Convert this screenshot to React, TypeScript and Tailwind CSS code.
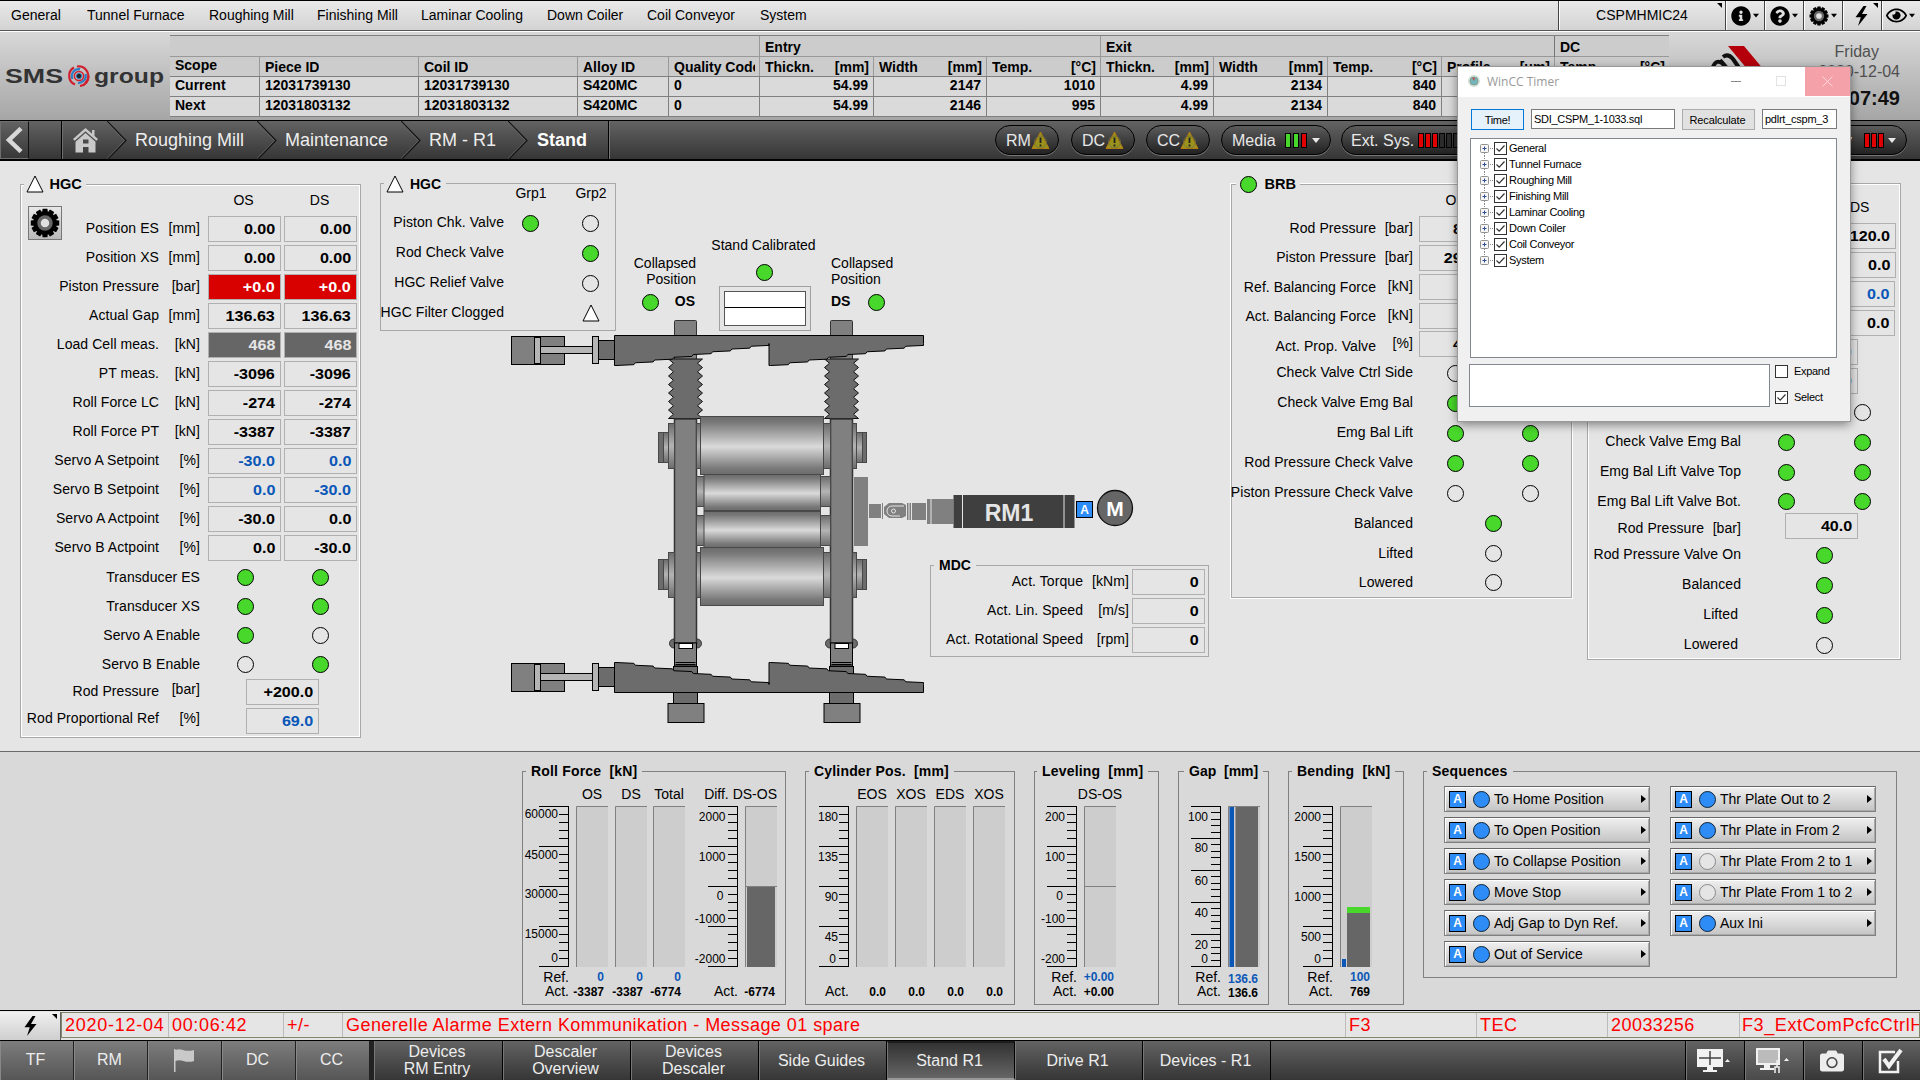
import React from "react";
import { FaCamera, FaCog, FaInfoCircle, FaQuestionCircle, FaRegEye } from "react-icons/fa";

type Kids = { children?: React.ReactNode };

/* ---------- small parts ---------- */

function Led({ on, className = "" }: { on?: boolean; className?: string }) {
  return (
    <span
      className={`block size-[17px] shrink-0 rounded-full border border-black ${on ? "bg-[#48d82b]" : "bg-[#e5e5e5]"} ${className}`}
    />
  );
}

function Field({ v, tone = "plain", className = "", pad = "pr-[5px]" }: { v: string; tone?: string; className?: string; pad?: string }) {
  const tones: Record<string, string> = {
    plain: "text-black",
    blue: "text-[#0a57b8]",
    red: "bg-[#d90000] text-white",
    gray: "bg-[#666666] text-[#e5e5e5]",
  };
  return (
    <span
      className={`flex h-[26px] w-[73px] shrink-0 items-center justify-end border border-[#b0b0b0] ${pad} ${tones[tone]} ${className}`}
    >
      <span className="origin-right scale-x-[1.15] text-[14px] leading-[24px] font-bold">{v}</span>
    </span>
  );
}

function Label({ children, className = "" }: Kids & { className?: string }) {
  return (
    <span className={`flex shrink-0 justify-end text-[14px] leading-[25px] tracking-[0.07px] whitespace-pre ${className}`}>
      {children}
    </span>
  );
}

function Triangle() {
  return (
    <svg width="18" height="18" viewBox="0 0 18 18">
      <path d="M9 1 L17 17 H1 Z" fill="#fff" stroke="#000" />
    </svg>
  );
}

function ABox({ className = "" }: { className?: string }) {
  return (
    <span
      className={`flex h-[17px] w-[17px] shrink-0 items-center justify-center border border-black bg-[#2d8cf5] text-[12px] font-bold text-white ${className}`}
    >
      A
    </span>
  );
}

function Caret({ className = "" }: { className?: string }) {
  return (
    <svg width="8" height="5" viewBox="0 0 8 5" className={className}>
      <path d="M0 0 H8 L4 5 Z" fill="currentColor" />
    </svg>
  );
}

function CornerMark() {
  return (
    <svg width="5" height="5" viewBox="0 0 5 5" className="absolute top-[2px] right-[3px]">
      <path d="M0 0 H5 V5 Z" />
    </svg>
  );
}

/* ---------- top menu ---------- */

const menu: [string, string][] = [
  ["General", "w-[76px]"],
  ["Tunnel Furnace", "w-[122px]"],
  ["Roughing Mill", "w-[108px]"],
  ["Finishing Mill", "w-[104px]"],
  ["Laminar Cooling", "w-[126px]"],
  ["Down Coiler", "w-[100px]"],
  ["Coil Conveyor", "w-[113px]"],
  ["System", "w-[100px]"],
];

function MenuBar() {
  const tool = "relative flex h-full items-center border-l border-[#444] shadow-[inset_1px_0_0_#fff]";
  return (
    <header className="flex h-[32px] border-t border-b border-t-black border-b-white bg-linear-to-b from-[#e9e9e9] to-[#d2d2d2] shadow-[inset_0_-1px_0_#555]">
      <nav className="flex flex-1 items-start pl-[11px] text-[14px]">
        {menu.map(([t, w]) => (
          <span key={t} className={`${w} whitespace-nowrap leading-[28px]`}>
            {t}
          </span>
        ))}
      </nav>
      <div className="flex h-[29px]">
        <div className={`${tool} w-[167px] justify-center pb-px text-[14px]`}>
          CSPMHMIC24
          <CornerMark />
        </div>
        <div className={`${tool} w-[39px] gap-[2px] pl-[5px]`}>
          <FaInfoCircle size={20} />
          <Caret className="w-[6px]" />
        </div>
        <div className={`${tool} w-[39px] gap-[2px] pl-[5px]`}>
          <FaQuestionCircle size={20} />
          <Caret className="w-[6px]" />
        </div>
        <div className={`${tool} w-[39px] gap-[2px] pl-[5px]`}>
          <Gear size={20} />
          <Caret className="w-[6px]" />
        </div>
        <div className={`${tool} w-[39px] pl-[10px]`}>
          <Bolt />
          <CornerMark />
        </div>
        <div className={`${tool} w-[39px] gap-[2px] pl-[4px]`}>
          <FaRegEye size={21} />
          <Caret className="w-[6px]" />
        </div>
      </div>
    </header>
  );
}

function Bolt() {
  return (
    <svg width="17" height="20" viewBox="0 0 17 20">
      <path d="M10.500 0 L2.500 11.300 H7.800 L5 20 L14.500 8 H9 L13.500 0 Z" />
    </svg>
  );
}

/* ---------- header with piece table ---------- */

function Logo() {
  return (
    <svg width="170" height="88" viewBox="0 32 170 88" className="shrink-0">
      <g fill="#333" fontFamily="Liberation Sans, sans-serif" fontWeight="700" fontSize="20">
        <text x="5" y="82.500" textLength="58" lengthAdjust="spacingAndGlyphs">SMS</text>
        <text x="94" y="82.500" textLength="70" lengthAdjust="spacingAndGlyphs">group</text>
      </g>
      <g fill="none" strokeWidth="2.2">
        <path d="M74 67.500 A9.500 9.500 0 0 0 75 84.500" stroke="#d01f2e" />
        <path d="M77 66.500 A9.500 9.500 0 0 1 85 83" stroke="#d01f2e" />
        <path d="M72.500 79 A7 7 0 0 1 80 69.200" stroke="#2b7fc4" />
        <path d="M80 86 A9.500 9.500 0 0 0 88.500 76" stroke="#d01f2e" />
        <path d="M85.500 74 A7 7 0 0 1 78 82.800" stroke="#2b7fc4" />
        <circle cx="79" cy="76" r="4.600" stroke="#d01f2e" strokeWidth="1.500" />
        <circle cx="79" cy="76" r="2.600" fill="#222" stroke="#2b7fc4" strokeWidth="1" />
      </g>
    </svg>
  );
}

const heads: [string, string][] = [
  ["Scope", ""], ["Piece ID", ""], ["Coil ID", ""], ["Alloy ID", ""], ["Quality Code", ""],
  ["Thickn.", "[mm]"], ["Width", "[mm]"], ["Temp.", "[°C]"], ["Thickn.", "[mm]"],
  ["Width", "[mm]"], ["Temp.", "[°C]"], ["Profile", "[um]"], ["Temp.", "[°C]"],
];
const tableRows = [
  ["Current", "12031739130", "12031739130", "S420MC", "0", "54.99", "2147", "1010", "4.99", "2134", "840", "0", "0"],
  ["Next", "12031803132", "12031803132", "S420MC", "0", "54.99", "2146", "995", "4.99", "2134", "840", "0", "0"],
];
const cols = "grid grid-cols-[89px_159px_159px_91px_91px_114px_113px_114px_113px_114px_114px_113px_115px]";

function PieceTable() {
  return (
    <div className="mt-[3px] w-[1499px] shrink-0 border-t border-[#808080] text-[14px] font-bold">
      <div className="grid h-[20px] grid-cols-[589px_341px_454px_115px] bg-[#cccccc] leading-[22px]">
        <span />
        <span className="border-l border-[#999] pl-[5px]">Entry</span>
        <span className="border-l border-[#999] pl-[5px]">Exit</span>
        <span className="border-l border-[#777] pl-[5px]">DC</span>
      </div>
      <div className={`${cols} h-[20px] border-t border-[#999] bg-[#cccccc]`}>
        {heads.map(([a, b], i) => (
          <span
            key={i}
            className={`flex justify-between overflow-hidden pr-[4px] pl-[5px] whitespace-nowrap ${i ? "border-l border-[#999] leading-[21px]" : "leading-[17px]"}`}
          >
            <span className="overflow-hidden">{a}</span>
            <span>{b}</span>
          </span>
        ))}
      </div>
      {tableRows.map((r) => (
        <div key={r[0]} className={`${cols} h-[20px] border-t border-[#808080] bg-[#dadada] leading-[17px]`}>
          {r.map((c, i) => (
            <span key={i} className={`pr-[5px] pl-[5px] ${i ? "border-l border-[#808080]" : ""} ${i > 4 ? "text-right" : ""}`}>
              {c}
            </span>
          ))}
        </div>
      ))}
      <div className="h-px bg-[#808080]" />
    </div>
  );
}

function Header() {
  return (
    <div className="flex h-[88px] bg-linear-to-b from-[#d8d8d8] to-[#a6a6a6]">
      <Logo />
      <PieceTable />
      <svg width="110" height="60" viewBox="0 0 110 60" className="mt-[8px] ml-[35px] shrink-0">
        <path d="M24 6 H40 L70 42 H54 Z" fill="#b5000c" />
        <g stroke="#111" strokeWidth="4" fill="none">
          <path d="M9 27 Q12 19 18 23 L31 38" />
          <path d="M16 20 L28 34 M19 17 Q24 13 29 19 L38 32" />
        </g>
      </svg>
      <div className="flex flex-1 flex-col items-end pt-[10px] pr-[20px] text-[16px] leading-[20px] text-[#505050]">
        <span className="pr-[21px]">Friday</span>
        <span>2020-12-04</span>
        <span className="mt-[3px] text-[20px] leading-[26px] font-bold text-[#111]">00:07:49</span>
      </div>
    </div>
  );
}

/* ---------- breadcrumb bar ---------- */

function Chevron() {
  return (
    <svg width="20" height="39" viewBox="0 0 20 39" className="shrink-0" fill="none">
      <path d="M0 0 L19 19.500 L0 39" stroke="#111" strokeWidth="1.200" />
      <path d="M-1.500 0 L17.500 19.500 L-1.500 39" stroke="#6c6c6c" strokeWidth=".7" />
    </svg>
  );
}

function Warn() {
  return (
    <svg width="19" height="19" viewBox="0 0 19 19">
      <path d="M9.500 1 L18 17.500 H1 Z" fill="#9c931c" stroke="#b27a10" />
      <circle cx="9.500" cy="11" r="6" fill="none" stroke="#6d7040" strokeWidth=".8" />
      <path d="M9.500 6.500 V12 M9.500 13.500 V15.500" stroke="#222" strokeWidth="1.800" />
    </svg>
  );
}

function Lamp({ c }: { c: "g" | "r" | "o" }) {
  const m = { g: "bg-[#48d82b]", r: "bg-[#e00000]", o: "bg-[#2b2b2b]" };
  return <span className={`h-[15px] w-[6px] border border-black ${m[c]}`} />;
}

const pill =
  "flex h-[30px] items-center rounded-full border border-black bg-linear-to-b from-[#5c5c5c] to-[#222] text-[16px] text-[#e8e8e8] shadow-[0_1px_0_#777]";

function Crumbs() {
  return (
    <div className="flex h-[41px] items-start border-t border-b-2 border-black bg-linear-to-b from-[#636363] to-[#363636] text-[18px] leading-[39px] text-[#ededed]">
      <div className="flex h-[38px] w-[29px] items-center justify-center border border-[#6e6e6e] border-r-[#111]">
        <svg width="20" height="26" viewBox="0 0 20 26" fill="none">
          <path d="M16 1.500 L4 13 L16 24.500" stroke="#d8d8d8" strokeWidth="4.500" />
        </svg>
      </div>
      <div className="h-[38px] w-[33px] border-r border-black" />
      <div className="flex h-[38px] w-[45px] items-center justify-center border-l border-[#6e6e6e]">
        <svg width="25" height="25" viewBox="0 0 25 25" fill="#c9c9c9">
          <path d="M12.500 0 L25 11 L23.300 12.700 L12.500 3.200 L1.700 12.700 L0 11 Z M19 2 H21.500 V8 L19 6 Z" />
          <path d="M12.500 5 L22.500 13.800 V24.500 H15.500 V19 H10 V24.500 H2.500 V13.800 Z M10 11.500 V15.500 H15.500 V11.500 Z" fillRule="evenodd" />
        </svg>
      </div>
      <Chevron />
      <span className="w-[130px] pl-[8px] whitespace-nowrap">Roughing Mill</span>
      <Chevron />
      <span className="w-[124px] pl-[8px]">Maintenance</span>
      <Chevron />
      <span className="w-[87px] pl-[8px] whitespace-nowrap">RM - R1</span>
      <Chevron />
      <span className="h-[38px] w-[81px] border-r border-black pl-[9px] font-bold text-white">Stand</span>
      <span className="h-[38px] w-[386px] border-l border-[#777]" />
      <div className="flex pt-[4px]">
        <span className={`${pill} w-[64px] pl-[10px]`}>RM<Warn /></span>
        <span className={`${pill} ml-[12px] w-[64px] pl-[10px]`}>DC<Warn /></span>
        <span className={`${pill} ml-[11px] w-[64px] pl-[10px]`}>CC<Warn /></span>
        <span className={`${pill} ml-[11px] w-[110px] pl-[10px]`}>
          Media
          <span className="ml-[9px] flex gap-[2px]"><Lamp c="g" /><Lamp c="g" /><Lamp c="r" /></span>
          <Caret className="ml-[5px]" />
        </span>
        <span className={`${pill} ml-[10px] w-[180px] pl-[9px]`}>
          Ext. Sys.
          <span className="ml-[4px] flex gap-px"><Lamp c="r" /><Lamp c="r" /><Lamp c="r" /><Lamp c="o" /><Lamp c="o" /><Lamp c="o" /></span>
        </span>
        <span className={`${pill} ml-[256px] w-[130px] justify-end pr-[10px]`}>
          Safety
          <span className="ml-[12px] flex gap-[1px]"><Lamp c="r" /><Lamp c="r" /><Lamp c="r" /></span>
          <Caret className="ml-[4px]" />
        </span>
      </div>
    </div>
  );
}

/* ---------- group boxes ---------- */

function Group({
  title, className, titleClass = "", children,
}: Kids & { title?: React.ReactNode; className: string; titleClass?: string }) {
  return (
    <section className={`relative ${className}`}>
      {title && (
        <h2 className={`absolute flex items-center text-[14px] leading-[18px] font-bold whitespace-pre ${titleClass}`}>{title}</h2>
      )}
      {children}
    </section>
  );
}

const hgcRows: [string, string, string, string, string][] = [
  ["Position ES", "[mm]", "0.00", "0.00", "plain"],
  ["Position XS", "[mm]", "0.00", "0.00", "plain"],
  ["Piston Pressure", "[bar]", "+0.0", "+0.0", "red"],
  ["Actual Gap", "[mm]", "136.63", "136.63", "plain"],
  ["Load Cell meas.", "[kN]", "468", "468", "gray"],
  ["PT meas.", "[kN]", "-3096", "-3096", "plain"],
  ["Roll Force LC", "[kN]", "-274", "-274", "plain"],
  ["Roll Force PT", "[kN]", "-3387", "-3387", "plain"],
  ["Servo A Setpoint", "[%]", "-30.0", "0.0", "blue"],
  ["Servo B Setpoint", "[%]", "0.0", "-30.0", "blue"],
  ["Servo A Actpoint", "[%]", "-30.0", "0.0", "plain"],
  ["Servo B Actpoint", "[%]", "0.0", "-30.0", "plain"],
];
const hgcLeds: [string, boolean, boolean][] = [
  ["Transducer ES", true, true],
  ["Transducer XS", true, true],
  ["Servo A Enable", true, false],
  ["Servo B Enable", false, true],
];

function HgcPanel() {
  return (
    <Group
      title={<><Triangle /><span className="ml-[6px] scale-x-[1.04]">HGC</span></>}
      titleClass="-top-[10px] left-[3px] bg-[#e5e5e5] pr-[5px] pl-[2px]"
      className="mt-[23px] ml-[20px] flex h-[554px] w-[341px] shrink-0 border border-[#a8a8a8] shadow-[inset_0_0_0_1px_#fff]"
    >
      <div className="w-[42px] shrink-0 pt-[21px] pl-[7px]">
        <div className="flex h-[34px] w-[34px] items-center justify-center border border-[#777] bg-linear-to-b from-[#e8e8e8] to-[#bbb]">
          <Gear size={30} />
        </div>
      </div>
      <div>
        <div className="flex h-[31px] text-[14px] leading-[30px]">
          <span className="ml-[144px] w-[73px] text-center">OS</span>
          <span className="ml-[3px] w-[73px] text-center">DS</span>
        </div>
        {hgcRows.map(([l, u, a, b, t]) => (
          <div key={l} className="flex h-[29px]">
            <Label className="w-[96px]">{l}</Label>
            <Label className="w-[41px]">{u}</Label>
            <Field v={a} tone={t} className="ml-[8px]" />
            <Field v={b} tone={t} className="ml-[3px]" />
          </div>
        ))}
        <div className="-mt-px">
          {hgcLeds.map(([l, a, b]) => (
            <div key={l} className="flex h-[29px] items-center">
              <Label className="w-[137px]">{l}</Label>
              <Led on={a} className="ml-[37px]" />
              <Led on={b} className="ml-[58px]" />
            </div>
          ))}
        </div>
        <div className="flex h-[29px]">
          <Label className="w-[96px]">Rod Pressure</Label>
          <Label className="-mt-[2px] w-[41px]">[bar]</Label>
          <Field v="+200.0" className="ml-[46px]" />
        </div>
        <div className="flex h-[29px]">
          <Label className="-mt-[2px] w-[96px]">Rod Proportional Ref</Label>
          <Label className="-mt-[2px] w-[41px]">[%]</Label>
          <Field v="69.0" tone="blue" className="ml-[46px]" />
        </div>
      </div>
    </Group>
  );
}

function Gear({ size }: { size: number }) {
  return (
    <svg width={size} height={size} viewBox="-15 -15 30 30">
      {[0, 30, 60, 90, 120, 150, 180, 210, 240, 270, 300, 330].map((a) => (
        <path key={a} d="M-2.400 -14.200 H2.400 L3 -10 H-3 Z" transform={`rotate(${a})`} />
      ))}
      <circle r="11.400" />
      <circle r="6" fill="#e0e0e0" stroke="#666" strokeWidth="3.500" />
    </svg>
  );
}

function ValvePanel() {
  const rows: [string, string, string][] = [
    ["Piston Chk. Valve", "on", "off"],
    ["Rod Check Valve", "", "on"],
    ["HGC Relief Valve", "", "off"],
    ["HGC Filter Clogged", "", "tri"],
  ];
  return (
    <Group
      title={<><Triangle /><span className="ml-[6px]">HGC</span></>}
      titleClass="-top-[9px] left-[3px] bg-[#e5e5e5] pr-[5px] pl-[2px]"
      className="mt-[22px] ml-[19px] h-[148px] w-[236px] border border-[#a8a8a8] [grid-area:1/1]"
    >
      <div className="flex h-[24px] text-[14px] leading-[18px]">
        <span className="ml-[130px] w-[40px] text-center">Grp1</span>
        <span className="ml-[20px] w-[40px] text-center">Grp2</span>
      </div>
      {rows.map(([l, a, b]) => (
        <div key={l} className="flex h-[30px] items-center">
          <Label className="-mt-px w-[123px]">{l}</Label>
          <span className="ml-[18px] w-[17px]">{a && <Led on />}</span>
          <span className="ml-[43px]">{b === "tri" ? <Triangle /> : <Led on={b === "on"} />}</span>
        </div>
      ))}
    </Group>
  );
}

function Calibration() {
  return (
    <div className="mt-[75px] ml-[270px] flex w-[264px] self-start text-[14px] [grid-area:1/1]">
      <div className="mt-[19px] w-[65px] text-right leading-[16px]">
        Collapsed<br />Position
        <div className="mt-[7px] flex items-center justify-between pr-px pl-[11px] font-bold">
          <Led on /><span className="-mt-[3px]">OS</span>
        </div>
      </div>
      <div className="ml-[23px] flex w-[92px] flex-col items-center">
        <span className="-ml-[3px] leading-[18px] whitespace-nowrap">Stand Calibrated</span>
        <Led on className="mt-[10px] -ml-px" />
        <div className="mt-[5px] w-full border border-[#a0a0a0] p-[4px]">
          <div className="h-[35px] border border-[#555] bg-white">
            <div className="h-[16px] border-b border-black" />
          </div>
        </div>
      </div>
      <div className="mt-[19px] ml-[20px] w-[64px] leading-[16px]">
        Collapsed<br />Position
        <div className="mt-[7px] flex items-center gap-[18px] font-bold">
          <span className="-mt-[3px]">DS</span><Led on />
        </div>
      </div>
    </div>
  );
}

/* ---------- stand drawing ---------- */

function wedgeEdge(x0: number, deep: number, shallow: number) {
  const n = 8;
  const w = 154.5;
  const pts: string[] = [];
  const dy = (shallow - deep) / n;
  for (let i = 0; i < n; i++) {
    const x = x0 + (w / n) * i;
    const y = deep + dy * i;
    pts.push(`${x + 1.5},${y}`, `${x + w / n},${y + dy * 0.3}`);
  }
  pts.push(`${x0 + w},${shallow}`);
  return pts;
}

function wedgePath(base: number, deep: number, shallow: number) {
  const a = wedgeEdge(614.5, deep, shallow);
  const b = wedgeEdge(769, deep, shallow);
  return `M614.5,${base} L614.5,${deep} L${a.join(" L")} L769,${deep} L${b.join(" L")} L923.5,${base} Z`;
}

function bellows(x: number) {
  let l = "";
  let r = "";
  for (let i = 0; i < 7; i++) {
    const y = 359 + i * 8.5;
    l = ` L${x},${y + 8.5} L${x + 5},${y + 4.25}` + l;
    r += ` L${x + 29},${y + 4.25} L${x + 34},${y + 8.5}`;
  }
  return `M${x},359 L${x + 34},359${r}${l} Z`;
}

function Post({ x }: { x: number }) {
  return (
    <g stroke="#333">
      <circle cx={x - 0.5} cy="643.500" r="4.500" fill="#6c6c6c" />
      <circle cx={x + 22.5} cy="643.500" r="4.500" fill="#6c6c6c" />
      <rect x={x} y="419" width="22" height="224" fill="#808080" strokeWidth="1.500" />
      <rect x={x} y="643" width="22" height="23" fill="#808080" stroke="#000" />
      <rect x={x + 4.5} y="643.500" width="13.500" height="5" fill="#fff" stroke="#000" />
      <path d={`M${x + 1} 662.500 H${x + 21} M${x + 1} 664.500 H${x + 21}`} stroke="#000" />
      <rect x={x - 1} y="666.500" width="24" height="37" fill="#6c6c6c" stroke="#000" />
      <rect x={x - 6.5} y="703.500" width="36" height="19" fill="#808080" stroke="#000" />
    </g>
  );
}

function Roll({ y, top, mid }: { y: number; top: number; mid: number }) {
  return (
    <g stroke="#484848">
      <rect x="658.500" y={mid} width="5" height="30" fill="#6c6c6c" />
      <rect x="663.500" y={mid} width="5" height="30" fill="url(#neck)" />
      <rect x="668.500" y={top} width="6" height="45" fill="url(#neck)" />
      <rect x="696.500" y={top} width="4" height="45" fill="url(#neck)" />
      <rect x="823.500" y={top} width="7" height="45" fill="url(#neck)" />
      <rect x="852.500" y={top} width="4" height="45" fill="url(#neck)" />
      <rect x="856.500" y={mid} width="6" height="30" fill="url(#neck)" />
      <rect x="862.500" y={mid} width="4" height="30" fill="#6c6c6c" />
      <rect x="700.500" y={y} width="123" height="58" fill="url(#roll)" />
    </g>
  );
}

function WorkRoll({ y, neck }: { y: number; neck: number }) {
  return (
    <g stroke="#484848">
      <rect x="696.500" y={neck} width="8" height="30" fill="url(#neck)" />
      <rect x="820.500" y={neck} width="10" height="30" fill="url(#neck)" />
      <rect x="704" y={y} width="116.500" height="36" fill="url(#roll)" />
    </g>
  );
}

function Cylinder({ y }: { y: number }) {
  return (
    <g stroke="#000">
      <rect x="511.500" y={y} width="53" height="28" fill="#808080" />
      <rect x="534.500" y={y + 1} width="6" height="26" fill="#b5b5b5" />
      <rect x="540.500" y={y + 10} width="52" height="7" fill="#b5b5b5" />
      <rect x="592.500" y={y} width="6" height="27" fill="#b5b5b5" />
      <rect x="598.500" y={y + 4} width="16" height="19" fill="#6c6c6c" />
    </g>
  );
}

function StandDrawing() {
  return (
    <svg width="635" height="415" viewBox="505 315 635 415" className="mt-[154px] ml-[144px] [grid-area:1/1]">
      <defs>
        <linearGradient id="roll" x1="0" y1="0" x2="0" y2="1">
          <stop offset="0" stopColor="#6c6c6c" />
          <stop offset=".1" stopColor="#787878" />
          <stop offset=".52" stopColor="#dadada" />
          <stop offset=".9" stopColor="#787878" />
          <stop offset="1" stopColor="#6c6c6c" />
        </linearGradient>
        <linearGradient id="neck" x1="0" y1="0" x2="0" y2="1">
          <stop offset="0" stopColor="#6c6c6c" />
          <stop offset=".5" stopColor="#b4b4b4" />
          <stop offset="1" stopColor="#6c6c6c" />
        </linearGradient>
      </defs>
      <rect x="674.500" y="320.500" width="22" height="40" rx="1" fill="#808080" stroke="#333" />
      <rect x="830.500" y="320.500" width="22" height="40" rx="1" fill="#808080" stroke="#333" />
      <path d={bellows(668.5)} fill="#6c6c6c" stroke="#111" />
      <path d={bellows(824.5)} fill="#6c6c6c" stroke="#111" />
      <Post x={674.5} />
      <Post x={830.5} />
      <Cylinder y={336.5} />
      <Cylinder y={663.5} />
      <path d={wedgePath(335.5, 365.5, 343.5)} fill="#6c6c6c" stroke="#000" />
      <path d={wedgePath(692.5, 662.5, 684.5)} fill="#6c6c6c" stroke="#000" />
      <Roll y={416.5} top={423.5} mid={432.5} />
      <Roll y={547.5} top={552.5} mid={559.5} />
      <WorkRoll y={474.5} neck={476.5} />
      <WorkRoll y={511.5} neck={515.5} />
      <g fill="#808080">
        <rect x="854" y="477" width="14" height="69" />
        <rect x="869" y="504" width="12" height="14" />
        <rect x="882" y="503" width="1" height="16" />
        <path d="M889 503 H902 L906 505 V516 L902 518 H889 L884 514 V507 Z" />
        <rect x="907" y="503" width="1.500" height="17" />
        <rect x="909.500" y="503" width="1.500" height="17" />
        <rect x="912" y="503" width="14" height="17" />
        <rect x="927" y="499" width="3.500" height="25" />
        <rect x="931.500" y="499" width="22" height="25" />
      </g>
      <path d="M904 506 H892 A4.500 4.500 0 0 0 892 516 H900" fill="none" stroke="#e5e5e5" />
      <circle cx="893.500" cy="511" r="2" fill="none" stroke="#e5e5e5" />
      <rect x="953.500" y="495" width="121" height="33" fill="#3f3f3f" />
      <path d="M962.500 495 V528 M1064 495 V528" stroke="#e5e5e5" />
      <g fontFamily="Liberation Sans, sans-serif" fontWeight="700" textAnchor="middle">
        <text x="1009" y="520.500" fontSize="23" fill="#e5e5e5">RM1</text>
        <rect x="1076.500" y="501.500" width="16" height="16" fill="#2d8cf5" stroke="#000" />
        <text x="1084.500" y="514" fontSize="12" fill="#fff">A</text>
        <circle cx="1115" cy="508" r="17.500" fill="#666" stroke="#111" strokeWidth="1.300" />
        <text x="1115" y="515.500" fontSize="21" fill="#fff">M</text>
      </g>
    </svg>
  );
}

function MdcPanel() {
  return (
    <Group
      title="MDC"
      titleClass="-top-[10px] left-[3px] bg-[#e5e5e5] px-[5px]"
      className="mt-[404px] ml-[569px] h-[92px] w-[279px] border border-[#a8a8a8] pt-[3px] [grid-area:1/1]"
    >
      {[["Act. Torque", "[kNm]"], ["Act. Lin. Speed", "[m/s]"], ["Act. Rotational Speed", "[rpm]"]].map(([l, u]) => (
        <div key={l} className="flex h-[29px]">
          <Label className="w-[152px]">{l}</Label>
          <Label className="w-[46px]">{u}</Label>
          <Field v="0" className="ml-[3px]" />
        </div>
      ))}
    </Group>
  );
}

/* ---------- balancing panels ---------- */

const brbRows: [string, string, string, string, string][] = [
  ["Rod Pressure", "[bar]", "80.0", "h-[29px]", ""],
  ["Piston Pressure", "[bar]", "290.0", "h-[29px]", ""],
  ["Ref. Balancing Force", "[kN]", "0", "h-[29px]", "mt-px"],
  ["Act. Balancing Force", "[kN]", "0", "h-[28px]", "mt-px"],
  ["Act. Prop. Valve", "[%]", "40.0", "h-[28px]", "mt-[3px]"],
];

function BrbPanel() {
  return (
    <Group
      title={<><Led on /><span className="ml-[8px] scale-x-[1.04]">BRB</span></>}
      titleClass="-top-[9px] left-[5px] bg-[#e5e5e5] pr-[5px] pl-[4px]"
      className="mt-[22px] h-[416px] w-[343px] shrink-0 border border-white shadow-[inset_0_0_0_1px_#a8a8a8]"
    >
      <div className="flex h-[32px] text-[14px] leading-[32px]">
        <span className="ml-[188px] w-[73px] text-center">OS</span>
        <span className="ml-[2px] w-[73px] text-center">DS</span>
      </div>
      {brbRows.map(([l, u, v, h, dy]) => (
        <div key={l} className={`flex ${h}`}>
          <Label className={`w-[145px] ${dy}`}>{l}</Label>
          <Label className="w-[37px]">{u}</Label>
          <Field v={v} className="ml-[6px]" pad="pr-[7px]" />
          <Field v={v} className="ml-[2px]" />
        </div>
      ))}
      {([["Check Valve Ctrl Side", false], ["Check Valve Emg Bal", true], ["Emg Bal Lift", true], ["Rod Pressure Check Valve", true], ["Piston Pressure Check Valve", false]] as [string, boolean][]).map(([l, on]) => (
        <div key={l} className="flex h-[30px] items-center">
          <Label className="-mt-[3px] w-[182px]">{l}</Label>
          <Led on={on} className="-mt-px ml-[34px]" />
          <Led on={on} className="-mt-px ml-[58px]" />
        </div>
      ))}
      {([["Balanced", true, "h-[28px]"], ["Lifted", false, "h-[33px]"], ["Lowered", false, "h-[25px]"]] as [string, boolean, string][]).map(([l, on, h]) => (
        <div key={l} className={`flex items-center ${h}`}>
          <Label className="w-[182px]">{l}</Label>
          <Led on={on} className="ml-[72px]" />
        </div>
      ))}
    </Group>
  );
}

function RightPanel() {
  return (
    <Group className="mt-[22px] ml-[14px] h-[477px] w-[314px] shrink-0 border border-[#a8a8a8] shadow-[inset_0_0_0_1px_#fff]">
      <div className="h-[39px] pl-[262px] text-[14px] leading-[47px]">DS</div>
      {[["120.0", "plain", "ml-[235px]"], ["0.0", "plain", "ml-[235px]"], ["0.0", "blue", "ml-[234px]"], ["0.0", "plain", "ml-[234px]"], ["0", "blue", "ml-[197px]"], ["9", "plain", "ml-[197px]"]].map(([v, t, m], i) => (
        <div key={i} className="h-[29px]">
          <Field v={v} tone={t} className={m} />
        </div>
      ))}
      {([["", false], ["Check Valve Emg Bal", true], ["Emg Bal Lift Valve Top", true], ["Emg Bal Lift Valve Bot.", true]] as [string, boolean][]).map(([l, on], i) => (
        <div key={i} className={`flex items-center ${i === 3 ? "h-[29px]" : "h-[30px]"}`}>
          <Label className="-mt-px w-[153px]">{l}</Label>
          <Led on={on} className="ml-[37px]" />
          <Led on={on} className="ml-[59px]" />
        </div>
      ))}
      <div className="-mt-[3px] flex h-[27px]">
        <Label className="mt-[3px] w-[116px]">Rod Pressure</Label>
        <Label className="mt-[3px] w-[37px]">[bar]</Label>
        <Field v="40.0" className="ml-[44px]" />
      </div>
      {([["Rod Pressure Valve On", true, ""], ["Balanced", true, ""], ["Lifted", true, "pr-[3px]"], ["Lowered", false, "pr-[3px]"]] as [string, boolean, string][]).map(([l, on, p]) => (
        <div key={l} className="flex h-[30px] items-center">
          <Label className={`-mt-px w-[153px] ${p}`}>{l}</Label>
          <Led on={on} className="ml-[75px]" />
        </div>
      ))}
    </Group>
  );
}

/* ---------- gauges ---------- */

type Mark = [string, number, number?];

function Axis({ marks, sections = 4, off = 11, w }: { marks: Mark[]; sections?: number; off?: number; w: number }) {
  const sec = 160 / sections;
  const lines = [];
  for (let i = 0; i <= sections * 5; i++) {
    const y = Math.round((i * sec) / 5) + 0.5;
    lines.push(<path key={i} d={`M${w - (i % 5 ? 10 : 30)} ${y} H${w}`} />);
  }
  return (
    <svg width={w} height="161" viewBox={`0 0 ${w} 161`} className="overflow-visible">
      <g stroke="#000" fill="none">
        {lines}
        <path d={`M${w - 0.5} 0 V161`} />
      </g>
      <g fontFamily="Liberation Sans, sans-serif" fontSize="12" textAnchor="end">
        {marks.map(([t, y, dx = 0]) => (
          <text key={t} x={w - off - dx} y={y - 806 + 4}>{t}</text>
        ))}
      </g>
    </svg>
  );
}

function Column({
  w, head = "", refv = "", act = "", labels, headEnd, pr = "pr-[4px]", children,
}: Kids & { w: string; head?: string; refv?: string; act?: string; labels?: boolean; headEnd?: boolean; pr?: string }) {
  const val = labels ? "text-[14px]" : `text-[12px] font-bold ${pr}`;
  return (
    <div className={`flex shrink-0 flex-col ${w}`}>
      <div className={`flex h-[34px] items-end pb-[2px] text-[14px] leading-[20px] whitespace-nowrap ${headEnd ? "justify-end" : "justify-center"}`}>
        {head}
      </div>
      {children}
      <div className={`mt-[3px] flex h-[14px] items-center justify-end whitespace-nowrap ${val} ${labels ? "" : "text-[#0a57b8]"}`}>{refv}</div>
      <div className={`flex h-[15px] items-center justify-end whitespace-nowrap ${val}`}>{act}</div>
    </div>
  );
}

function Bar({ children }: Kids) {
  return (
    <svg width="32" height="161" viewBox="0 0 32 161">
      <rect width="32" height="161" fill="#cdcdcd" />
      {children}
      <path d="M0.500 161 V0.500 H32" fill="none" stroke="#808080" />
    </svg>
  );
}

const gaugeBox = "mt-[19px] flex h-[234px] shrink-0 border border-[#808080]";
const gaugeTitle = "-top-[10px] bg-[#d9d9d9] px-[5px]";

function Gauges() {
  return (
    <>
      <Group title="Roll Force  [kN]" titleClass={`${gaugeTitle} left-[3px] tracking-[0.18px]`} className={`${gaugeBox} ml-[522px] w-[264px]`}>
        <Column w="w-[46px]" labels refv="Ref." act="Act.">
          <Axis w={46} marks={[["60000", 814], ["45000", 854.5], ["30000", 894], ["15000", 934], ["0", 958]]} />
        </Column>
        <Column w="ml-[7px] w-[32px]" head="OS" refv="0" act="-3387"><Bar /></Column>
        <Column w="ml-[7px] w-[32px]" head="DS" refv="0" act="-3387"><Bar /></Column>
        <Column w="ml-[6px] w-[32px]" head="Total" refv="0" act="-6774"><Bar /></Column>
        <Column w="ml-[7px] w-[46px]" labels act="Act.">
          <Axis w={46} off={12.5} marks={[["2000", 817], ["1000", 857], ["0", 896, 2], ["-1000", 919], ["-2000", 959]]} />
        </Column>
        <Column w="ml-[7px] w-[32px]" head="Diff. DS-OS" headEnd act="-6774" pr="pr-[2px]">
          <Bar><path d="M2 80.500 H30 V161 H2 Z" fill="#666" /><path d="M0 80.500 H32" stroke="#808080" /></Bar>
        </Column>
      </Group>
      <Group title="Cylinder Pos.  [mm]" titleClass={`${gaugeTitle} left-[3px] tracking-[0.18px]`} className={`${gaugeBox} ml-[19px] w-[210px]`}>
        <Column w="w-[43px]" labels act="Act.">
          <Axis w={43} marks={[["180", 817], ["135", 857], ["90", 897], ["45", 937], ["0", 959, 2]]} />
        </Column>
        <Column w="ml-[7px] w-[32px]" head="EOS" act="0.0" pr="pr-[2px]"><Bar /></Column>
        <Column w="ml-[7px] w-[32px]" head="XOS" act="0.0" pr="pr-[2px]"><Bar /></Column>
        <Column w="ml-[7px] w-[32px]" head="EDS" act="0.0" pr="pr-[2px]"><Bar /></Column>
        <Column w="ml-[7px] w-[32px]" head="XOS" act="0.0" pr="pr-[2px]"><Bar /></Column>
      </Group>
      <Group title="Leveling  [mm]" titleClass={`${gaugeTitle} left-[2px] tracking-[0.18px]`} className={`${gaugeBox} ml-[19px] w-[125px]`}>
        <Column w="w-[42px]" labels refv="Ref." act="Act.">
          <Axis w={42} off={12} marks={[["200", 817], ["100", 857], ["0", 896, 2], ["-100", 919], ["-200", 959]]} />
        </Column>
        <Column w="ml-[7px] w-[32px]" head="DS-OS" refv="+0.00" act="+0.00" pr="pr-[2px]">
          <Bar><path d="M0 80.500 H32" stroke="#808080" /></Bar>
        </Column>
      </Group>
      <Group title="Gap  [mm]" titleClass={`${gaugeTitle} left-[5px]`} className={`${gaugeBox} ml-[19px] w-[91px]`}>
        <Column w="w-[42px]" labels refv="Ref." act="Act.">
          <Axis w={42} off={13} sections={5} marks={[["100", 817], ["80", 848], ["60", 880.5], ["40", 912.5], ["20", 944.5], ["0", 958.5]]} />
        </Column>
        <Column w="ml-[7px] w-[32px]" refv="136.6" act="136.6" pr="pr-[2px] pt-[3px]">
          <Bar><path d="M1.500 1 H6 V161 H1.500 Z" fill="#0a57b8" /><path d="M7.500 1 H30 V161 H7.500 Z" fill="#666" /></Bar>
        </Column>
      </Group>
      <Group title="Bending  [kN]" titleClass={`${gaugeTitle} left-[3px] tracking-[0.18px]`} className={`${gaugeBox} ml-[19px] w-[116px]`}>
        <Column w="w-[44px]" labels refv="Ref." act="Act.">
          <Axis w={44} off={12} marks={[["2000", 817], ["1500", 857], ["1000", 897], ["500", 937], ["0", 959]]} />
        </Column>
        <Column w="ml-[7px] w-[32px]" refv="100" act="769" pr="pr-[2px]">
          <Bar>
            <path d="M7 101 H30 V107 H7 Z" fill="#48d82b" />
            <path d="M7 107 H30 V161 H7 Z" fill="#666" />
            <path d="M2 153 H6 V161 H2 Z" fill="#0a57b8" />
          </Bar>
        </Column>
      </Group>
    </>
  );
}

function SeqButton({ t, on }: { t: string; on: boolean }) {
  return (
    <div className="flex h-[26px] w-[206px] items-center border border-[#808080] border-t-[#666] bg-linear-to-b from-[#f0f0f0] to-[#c4c4c4] pl-[4px] text-[14px] shadow-[inset_1px_1px_0_#fff,inset_-1px_-1px_0_#aaa]">
      <ABox />
      <span className={`mr-[4px] ml-[7px] size-[17px] shrink-0 rounded-full border ${on ? "border-[#123] bg-[#2d8cf5]" : "border-[#888] bg-[#e5e5e5]"}`} />
      <span className="flex-1 whitespace-nowrap">{t}</span>
      <svg width="5" height="8" viewBox="0 0 5 8" className="mr-[3px]"><path d="M0 0 L5 4 L0 8 Z" /></svg>
    </div>
  );
}

function Sequences() {
  const left = ["To Home Position", "To Open Position", "To Collapse Position", "Move Stop", "Adj Gap to Dyn Ref.", "Out of Service"];
  const right: [string, boolean][] = [["Thr Plate Out to 2", true], ["Thr Plate in From 2", true], ["Thr Plate From 2 to 1", false], ["Thr Plate From 1 to 2", false], ["Aux Ini", true]];
  return (
    <Group title="Sequences" titleClass={`${gaugeTitle} left-[3px] tracking-[0.18px]`} className="mt-[19px] ml-[19px] flex h-[207px] w-[474px] shrink-0 gap-[20px] border border-[#808080] pt-[14px] pl-[20px]">
      <div className="flex flex-col gap-[5px]">{left.map((t) => <SeqButton key={t} t={t} on />)}</div>
      <div className="flex flex-col gap-[5px]">{right.map(([t, on]) => <SeqButton key={t} t={t} on={on} />)}</div>
    </Group>
  );
}

/* ---------- alarm line and bottom navigation ---------- */

function AlarmBar() {
  const cell = "flex shrink-0 items-center overflow-hidden border-r border-[#bbb] pl-[3px] whitespace-nowrap";
  return (
    <div className="flex h-[31px] border-t border-b border-black bg-[#e5e5e5] pt-px">
      <div className="relative flex w-[61px] shrink-0 items-center justify-center border-r border-[#666] bg-linear-to-b from-[#f0f0f0] to-[#cfcfcf]">
        <Bolt />
        <CornerMark />
      </div>
      <div className="mb-[2px] flex min-w-0 flex-1 overflow-hidden border border-[#85856a] text-[18px] tracking-[0.45px] text-[#ff0000]">
        <span className={`${cell} w-[107px] tracking-[0.75px]`}>2020-12-04</span>
        <span className={`${cell} w-[115px] tracking-[0.65px]`}>00:06:42</span>
        <span className={`${cell} w-[59px]`}>+/-</span>
        <span className={`${cell} w-[1003px]`}>Generelle Alarme Extern Kommunikation - Message 01 spare</span>
        <span className={`${cell} w-[131px]`}>F3</span>
        <span className={`${cell} w-[131px]`}>TEC</span>
        <span className={`${cell} w-[132px]`}>20033256</span>
        <span className="flex items-center pl-[2px] tracking-[0.6px] whitespace-nowrap">F3_ExtComPcfcCtrlHmi</span>
      </div>
    </div>
  );
}

function BottomNav() {
  const sys = "flex items-center justify-center border-r border-r-[#222] border-l border-l-[#888] bg-linear-to-b from-[#7d7d7d] to-[#565656] pr-[3px] pb-px";
  const tab = "flex flex-col items-center justify-center border-r border-r-black border-l border-l-[#777] pr-[3px] pb-px leading-[17px] whitespace-nowrap";
  const tabs: [string[], string][] = [
    [["Devices", "RM Entry"], "w-[129px]"],
    [["Descaler", "Overview"], "w-[128px]"],
    [["Devices", "Descaler"], "w-[128px]"],
    [["Side Guides"], "w-[128px]"],
    [["Stand R1"], "w-[128px] border-t-2 border-t-[#1c1c1c] border-b-2 border-b-[#999] bg-linear-to-b from-[#333] to-[#666]"],
    [["Drive R1"], "w-[128px]"],
    [["Devices - R1"], "w-[128px]"],
  ];
  const tool = "flex items-center justify-center border-l border-l-black pr-[3px] shadow-[inset_1px_0_0_#777]";
  return (
    <footer className="flex h-[39px] bg-linear-to-b from-[#636363] to-[#363636] text-[16px] text-[#ededed]">
      <span className={`${sys} w-[74px]`}>TF</span>
      <span className={`${sys} w-[74px]`}>RM</span>
      <span className={`${sys} w-[74px]`}>
        <svg width="22" height="24" viewBox="0 0 22 24" fill="#c9c9c9"><path d="M1 1 H2.500 V24 H1 Z M2.500 2 C8 -1 11 5 21 2 V13 C12 16 8 10 2.500 13 Z" /></svg>
      </span>
      <span className={`${sys} w-[74px]`}>DC</span>
      <span className={`${sys} w-[74px]`}>CC</span>
      <span className="w-[4px] bg-[#222]" />
      {tabs.map(([ls, c]) => (
        <span key={ls.join(" ")} className={`${tab} ${c}`}>
          {ls.map((l) => <span key={l}>{l}</span>)}
        </span>
      ))}
      <span className="flex-1" />
      <span className={`${tool} w-[59px]`}>
        <svg width="33" height="24" viewBox="0 0 33 24" fill="#f2f2f2">
          <path d="M0 0 H26 V18 H0 Z M10 18 H16 V21 H20 V23 H6 V21 H10 Z" />
          <path d="M13 2 V16 M2 9 H24" stroke="#444" strokeWidth="1.500" />
          <path d="M28 13 L30.500 10 L33 13 Z" />
        </svg>
      </span>
      <span className={`${tool} w-[59px] bg-white/10`}>
        <svg width="33" height="26" viewBox="0 0 33 26" fill="#f2f2f2">
          <path d="M0 0 H24 V17 H0 Z M8 17 H14 V20 H18 V22 H4 V20 H8 Z" />
          <path d="M2 2 H22 V15 H2 Z" fill="#bbb" />
          <path d="M21 12 V19 M19 25 V19 H23 V25" stroke="#f2f2f2" fill="none" strokeWidth="1.500" />
          <path d="M28 13 L30.500 10 L33 13 Z" />
        </svg>
      </span>
      <span className={`${tool} w-[59px]`}><FaCamera size={24} /></span>
      <span className={`${tool} w-[58px]`}>
        <svg width="26" height="26" viewBox="0 0 26 26" fill="none" stroke="#f2f2f2">
          <path d="M18 4 H3 V24 H21 V13" strokeWidth="2.500" />
          <path d="M7 11 L12 18 L24 2" strokeWidth="4" />
        </svg>
      </span>
    </footer>
  );
}

/* ---------- timer window ---------- */

function Check({ on }: { on?: boolean }) {
  return (
    <svg width="13" height="13" viewBox="0 0 13 13" className="shrink-0">
      <rect x=".5" y=".5" width="12" height="12" fill="#fff" stroke="#333" />
      {on && <path d="M2.500 6.500 L5.200 9.200 L10.500 3.500" fill="none" stroke="#333" strokeWidth="1.200" />}
    </svg>
  );
}

function TimerWindow() {
  const nodes = ["General", "Tunnel Furnace", "Roughing Mill", "Finishing Mill", "Laminar Cooling", "Down Coiler", "Coil Conveyor", "System"];
  return (
    <div className="absolute top-[67px] left-[1458px] h-[354px] w-[392px] bg-[#f0f0f0] text-[11px] tracking-[-0.3px] shadow-[0_3px_10px_rgba(0,0,0,0.5)] outline outline-[#999]">
      <div className="flex h-[30px] bg-white">
        <svg width="14" height="14" viewBox="0 0 14 14" className="mt-[7px] ml-[9px]">
          <circle cx="7" cy="7" r="6" fill="#cfe3d8" />
          <circle cx="7" cy="7" r="4" fill="#6fb7bd" stroke="#8a9a90" />
          <path d="M7 7 L5 3.500 L8 4 Z" fill="#c94a4a" />
        </svg>
        <span className="ml-[6px] font-['Open_Sans',sans-serif] text-[12px] leading-[29px] tracking-normal text-[#999]">WinCC Timer</span>
        <svg width="60" height="29" viewBox="0 0 60 29" className="ml-auto" fill="none">
          <path d="M0 14.500 H10" stroke="#888" />
          <rect x="45.500" y="9.500" width="9" height="9" stroke="#e2e2e2" />
        </svg>
        <span className="ml-[14px] flex h-[29px] w-[45px] items-center justify-center bg-[#f5a1a9]">
          <svg width="11" height="11" viewBox="0 0 11 11"><path d="M.5 .5 L10.500 10.500 M10.500 .5 L.5 10.500" stroke="#fbd5d8" /></svg>
        </span>
      </div>
      <div className="flex pt-[12px] pl-[13px] leading-[20px]">
        <span className="h-[21px] w-[53px] border border-[#0078d7] bg-[#e5f1fb] text-center">Time!</span>
        <span className="ml-[7px] h-[20px] w-[144px] border border-[#7a7a7a] bg-white pl-[2px] leading-[18px]">SDI_CSPM_1-1033.sql</span>
        <span className="ml-[7px] h-[21px] w-[73px] border border-[#adadad] bg-[#e1e1e1] pr-[2px] text-center tracking-[-0.15px]">Recalculate</span>
        <span className="ml-[7px] h-[20px] w-[75px] border border-[#7a7a7a] bg-white pl-[2px] leading-[18px] tracking-[-0.25px]">pdlrt_cspm_3</span>
      </div>
      <div className="mt-[8px] ml-[12px] h-[220px] w-[367px] border border-[#828790] bg-white pt-px pl-[9px]">
        {nodes.map((n, i) => (
          <div key={n} className="flex h-[16px] items-center">
            <svg width="14" height="16" viewBox="0 0 14 16" className="shrink-0" fill="none">
              {i > 0 && <path d="M4.500 0 V4" stroke="#888" strokeDasharray="1 1" />}
              {i < 7 && <path d="M4.500 13 V16" stroke="#888" strokeDasharray="1 1" />}
              <path d="M10 8.500 H14" stroke="#888" strokeDasharray="1 1" />
              <rect x=".5" y="4.500" width="8" height="8" rx="1" fill="#f6f6f6" stroke="#919191" />
              <path d="M2.500 8.500 H6.500 M4.500 6.500 V10.500" stroke="#2f4f9a" />
            </svg>
            <Check on />
            <span className="ml-[2px]">{n}</span>
          </div>
        ))}
      </div>
      <div className="mt-[6px] ml-[11px] flex">
        <div className="h-[43px] w-[301px] border border-[#828790] bg-white" />
        <div className="ml-[5px] flex flex-col gap-[13px] pt-px">
          <span className="flex h-[13px] items-center gap-[6px]"><Check />Expand</span>
          <span className="flex h-[13px] items-center gap-[6px]"><Check on />Select</span>
        </div>
      </div>
    </div>
  );
}

/* ---------- page ---------- */

export default function App() {
  return (
    <div className="relative h-[1080px] w-[1920px] overflow-hidden bg-[#e5e5e5] font-['Liberation_Sans',Arial,sans-serif] text-black">
      <MenuBar />
      <Header />
      <Crumbs />
      <main className="flex h-[590px] items-start bg-[#e5e5e5]">
        <HgcPanel />
        <div className="grid w-[869px] shrink-0 items-start justify-items-start">
          <ValvePanel />
          <Calibration />
          <StandDrawing />
          <MdcPanel />
        </div>
        <BrbPanel />
        <RightPanel />
      </main>
      <section className="flex h-[259px] items-start border-t border-[#6b6b6b] bg-[#d9d9d9]">
        <Gauges />
        <Sequences />
      </section>
      <AlarmBar />
      <BottomNav />
      <TimerWindow />
    </div>
  );
}
